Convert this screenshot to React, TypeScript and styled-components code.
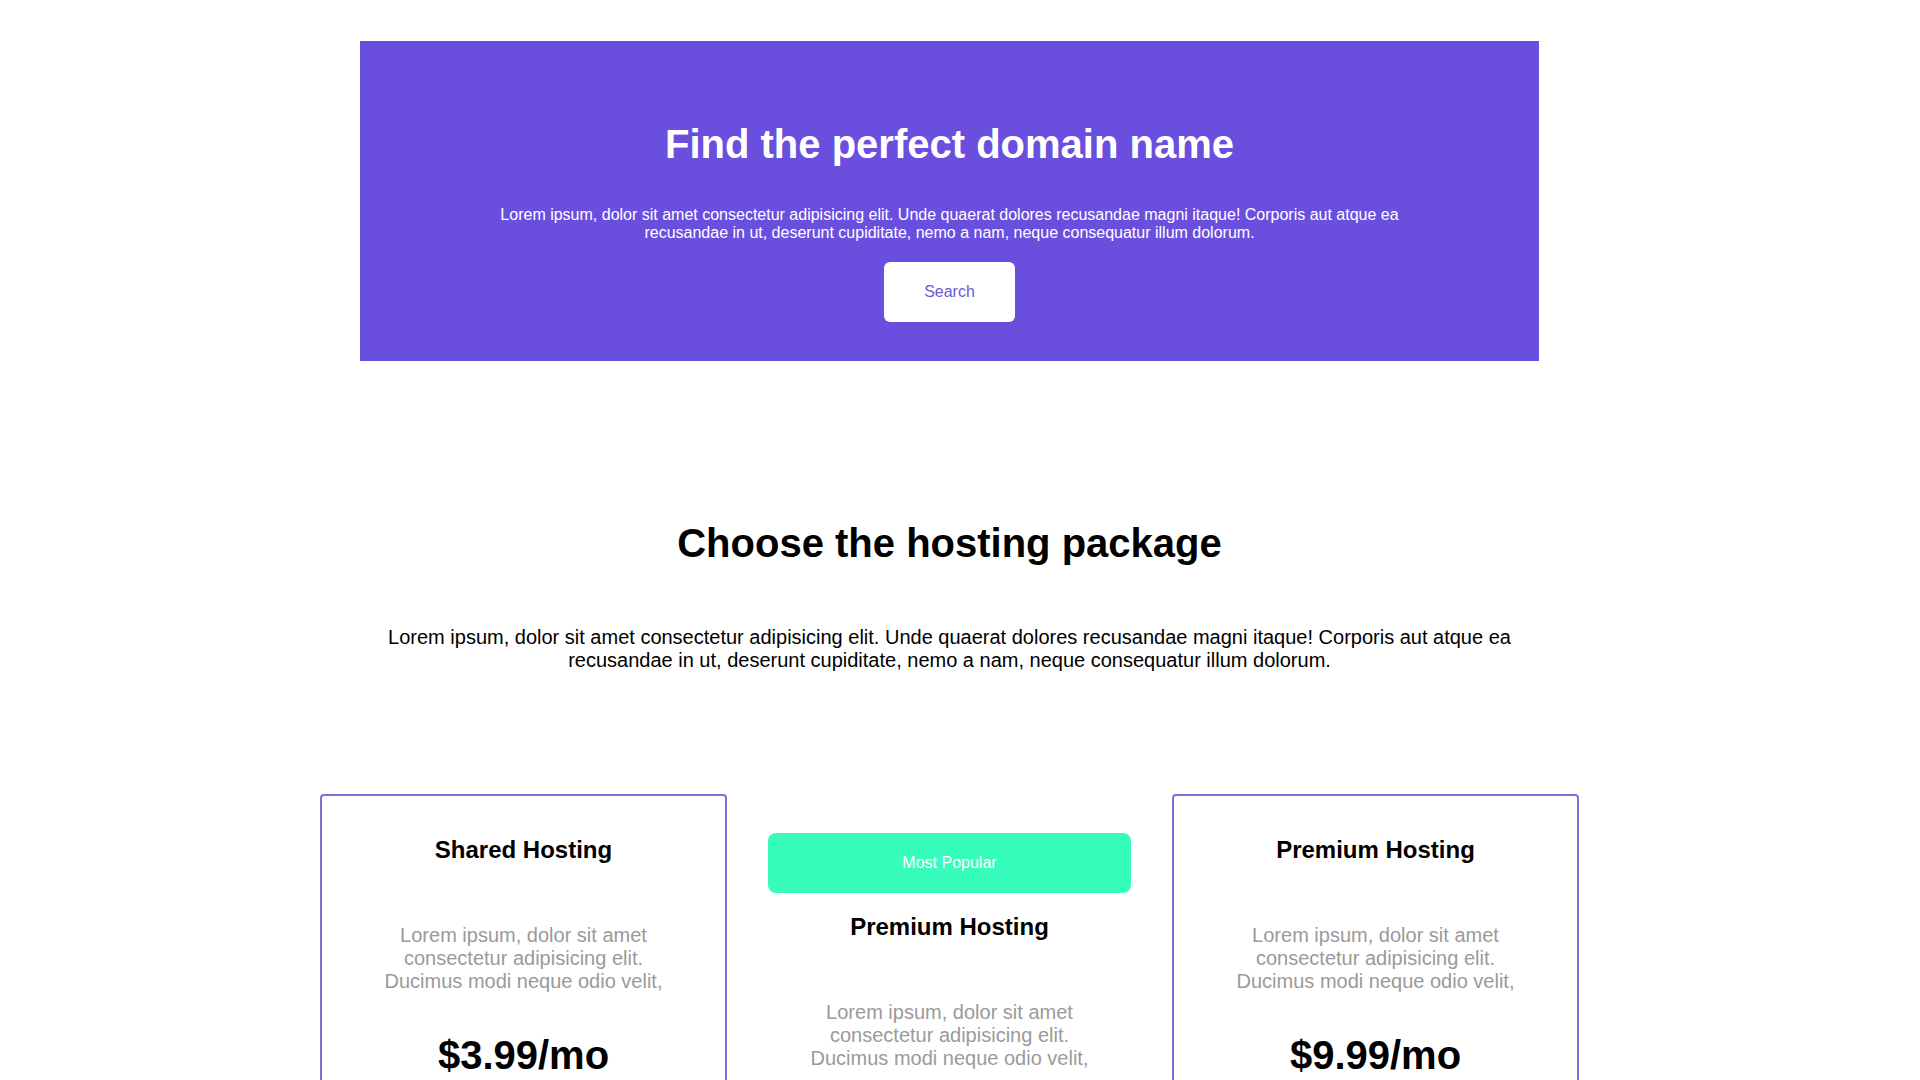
import React from "react";
import styled, { createGlobalStyle } from "styled-components";

const GlobalStyle = createGlobalStyle`
  html, body {
    margin: 0;
    padding: 0;
    background: #ffffff;
    font-family: "Liberation Sans", Arial, sans-serif;
    color: #000000;
  }
  * { box-sizing: border-box; }
`;

/* padding-right reproduces the 21px the reference loses to its scrollbar */
const Page = styled.main`
  padding: 41px 21px 80px 0;
  display: flex;
  flex-direction: column;
  align-items: center;
`;

const Hero = styled.section`
  width: 1179px;
  background: #6a4fdf;
  padding: 81px 0 39px;
  display: flex;
  flex-direction: column;
  align-items: center;
  text-align: center;
`;

const HeroTitle = styled.h1`
  margin: 0;
  font-size: 40px;
  font-weight: 700;
  color: #ffffff;
`;

const HeroText = styled.p`
  margin: 39px 0 0;
  width: 80%;
  font-size: 16px;
  color: #ffffff;
`;

const SearchButton = styled.button`
  margin-top: 20px;
  height: 60px;
  padding: 0 40px;
  border: none;
  border-radius: 6px;
  background: #ffffff;
  color: #6a5ad6;
  font-family: "Liberation Sans", Arial, sans-serif;
  font-size: 16px;
  cursor: pointer;
`;

const Packages = styled.section`
  margin-top: 160px;
  display: flex;
  flex-direction: column;
  align-items: center;
  text-align: center;
`;

const SectionTitle = styled.h2`
  margin: 0;
  font-size: 40px;
  font-weight: 700;
`;

const SectionText = styled.p`
  margin: 60px 0 0;
  width: 1179px;
  font-size: 20px;
  color: #000000;
`;

const CardRow = styled.div`
  margin-top: 121.5px;
  width: 1259px;
  display: flex;
  justify-content: space-between;
  align-items: flex-start;
`;

const Card = styled.article<{ $featured?: boolean }>`
  width: 407px;
  padding: 19px 20px 40px;
  border: 2px solid ${(p) => (p.$featured ? "transparent" : "#7773dd")};
  border-radius: 4px;
  display: flex;
  flex-direction: column;
  align-items: center;
  text-align: center;
`;

const Badge = styled.div`
  margin-top: 18px;
  width: 100%;
  height: 60px;
  border-radius: 8px;
  background: #36fdbc;
  color: #ffffff;
  font-size: 16px;
  display: flex;
  align-items: center;
  justify-content: center;
`;

const CardTitle = styled.h3<{ $afterBadge?: boolean }>`
  margin: ${(p) => (p.$afterBadge ? "20px" : "21.5px")} 0 0;
  font-size: 24px;
  font-weight: 700;
`;

const CardText = styled.p`
  margin: 60px 0 0;
  max-width: 300px;
  font-size: 20px;
  color: #9a9a9a;
`;

const Price = styled.div`
  margin-top: 40px;
  font-size: 40px;
  font-weight: 700;
`;

const Features = styled.ul`
  list-style: none;
  margin: 30px 0 0;
  padding: 0;
  font-size: 18px;
  color: #555555;
  line-height: 2;
`;

const BuyButton = styled.button`
  margin-top: 30px;
  height: 56px;
  padding: 0 40px;
  border: none;
  border-radius: 6px;
  background: #6a4fdf;
  color: #ffffff;
  font-family: "Liberation Sans", Arial, sans-serif;
  font-size: 16px;
`;

const plans = [
  { name: "Shared Hosting", price: "$3.99/mo", featured: false },
  { name: "Premium Hosting", price: "$6.99/mo", featured: true },
  { name: "Premium Hosting", price: "$9.99/mo", featured: false },
];

const lorem =
  "Lorem ipsum, dolor sit amet consectetur adipisicing elit. Ducimus modi neque odio velit,";

export default function App() {
  return (
    <>
      <GlobalStyle />
      <Page>
        <Hero>
          <HeroTitle>Find the perfect domain name</HeroTitle>
          <HeroText>
            Lorem ipsum, dolor sit amet consectetur adipisicing elit. Unde quaerat dolores
            recusandae magni itaque! Corporis aut atque ea recusandae in ut, deserunt
            cupiditate, nemo a nam, neque consequatur illum dolorum.
          </HeroText>
          <SearchButton>Search</SearchButton>
        </Hero>

        <Packages>
          <SectionTitle>Choose the hosting package</SectionTitle>
          <SectionText>
            Lorem ipsum, dolor sit amet consectetur adipisicing elit. Unde quaerat dolores
            recusandae magni itaque! Corporis aut atque ea recusandae in ut, deserunt
            cupiditate, nemo a nam, neque consequatur illum dolorum.
          </SectionText>

          <CardRow>
            {plans.map((plan, i) => (
              <Card key={i} $featured={plan.featured}>
                {plan.featured && <Badge>Most Popular</Badge>}
                <CardTitle $afterBadge={plan.featured}>{plan.name}</CardTitle>
                <CardText>{lorem}</CardText>
                <Price>{plan.price}</Price>
                <Features>
                  <li>1 Website</li>
                  <li>10 GB Storage</li>
                  <li>Free SSL</li>
                </Features>
                <BuyButton>Get Started</BuyButton>
              </Card>
            ))}
          </CardRow>
        </Packages>
      </Page>
    </>
  );
}
